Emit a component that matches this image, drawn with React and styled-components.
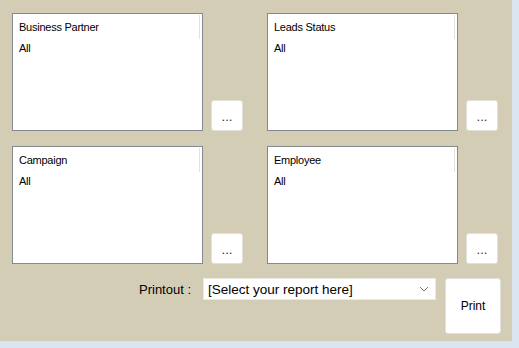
import React from "react";
import styled, { createGlobalStyle } from "styled-components";

const Global = createGlobalStyle`
  html, body { margin: 0; padding: 0; background: #dae5f1; }
  body { font-family: Tahoma, "Liberation Sans", Arial, sans-serif; }
`;

const Panel = styled.div`
  width: 512px;
  height: 341px;
  box-sizing: border-box;
  background: #d4cdb6;
  padding: 13px 0 0 12px;
  display: flex;
  flex-direction: column;
`;

const Grid = styled.div`
  display: grid;
  grid-template-columns: 231px 232px;
  column-gap: 24px;
  row-gap: 15px;
`;

const Cell = styled.div`
  display: flex;
  align-items: flex-end;
  gap: 8px;
`;

const ListBox = styled.div`
  position: relative;
  width: 191px;
  height: 118px;
  box-sizing: border-box;
  border: 1px solid #85888d;
  background: #fff;
  padding: 6px 0 0 6px;
  font-size: 11px;
  letter-spacing: -0.25px;
  color: #000;
`;

const Track = styled.div`
  position: absolute;
  top: 1px;
  right: 2px;
  width: 1px;
  height: 24px;
  background: #e1e1e1;
`;

const Title = styled.div`
  line-height: 14px;
`;

const Item = styled.div`
  margin-top: 7px;
  line-height: 14px;
`;

const DotButton = styled.button`
  width: 32px;
  height: 31px;
  box-sizing: border-box;
  border: 1px solid #e2e0da;
  border-radius: 3px;
  background: #fff;
  padding: 2px 0 0 0;
  display: flex;
  align-items: center;
  justify-content: center;
  font-family: "Liberation Sans", Arial, sans-serif;
  font-size: 13px;
  font-weight: normal;
  color: ${(p) => p.$color};
`;

const Bottom = styled.div`
  display: flex;
  align-items: flex-start;
  margin-top: 14px;
  padding-left: 127px;
`;

const Label = styled.div`
  font-size: 13px;
  line-height: 14px;
  margin-top: 5px;
  width: 64px;
  color: #000;
  white-space: pre;
`;

const Select = styled.div`
  width: 233px;
  height: 22px;
  box-sizing: border-box;
  background: #fff;
  border: 1px solid #ece9e0;
  display: flex;
  align-items: center;
  justify-content: space-between;
  padding: 0 6px 0 4px;
  font-family: "Liberation Sans", Arial, sans-serif;
  font-size: 13.5px;
  color: #000;
`;

const PrintButton = styled.button`
  margin-left: 9px;
  width: 56px;
  height: 56px;
  box-sizing: border-box;
  border: 1px solid #e2e0da;
  border-radius: 3px;
  background: #fff;
  font-family: Tahoma, "Liberation Sans", Arial, sans-serif;
  font-size: 12px;
  color: #000;
  padding: 0;
`;

const boxes = [
  { title: "Business Partner", color: "#1b2a5c" },
  { title: "Leads Status", color: "#4a2a10" },
  { title: "Campaign", color: "#1b2a5c" },
  { title: "Employee", color: "#4a2a10" },
];

export default function App() {
  return (
    <>
      <Global />
      <Panel>
        <Grid>
          {boxes.map((b) => (
            <Cell key={b.title}>
              <ListBox>
                <Track />
                <Title>{b.title}</Title>
                <Item>All</Item>
              </ListBox>
              <DotButton $color={b.color}>...</DotButton>
            </Cell>
          ))}
        </Grid>
        <Bottom>
          <Label>{"Printout :"}</Label>
          <Select>
            <span>[Select your report here]</span>
            <svg width="10" height="6" viewBox="0 0 10 6">
              <path d="M1 1 L5 5 L9 1" fill="none" stroke="#777" strokeWidth="1" />
            </svg>
          </Select>
          <PrintButton>Print</PrintButton>
        </Bottom>
      </Panel>
    </>
  );
}
